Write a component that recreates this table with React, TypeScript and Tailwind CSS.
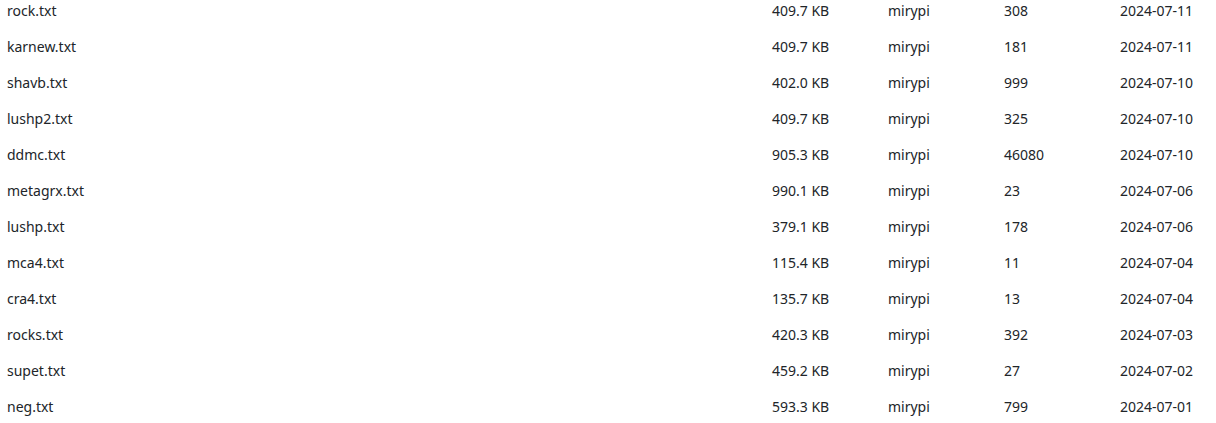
import React from 'react';

// ============================================================
// DATA
// ============================================================

interface FileRow {
  name: string;
  size: string;
  owner: string;
  downloads: number;
  date: string;
}

const FILES: FileRow[] = [
  { name: 'rock.txt', size: '409.7 KB', owner: 'mirypi', downloads: 308, date: '2024-07-11' },
  { name: 'karnew.txt', size: '409.7 KB', owner: 'mirypi', downloads: 181, date: '2024-07-11' },
  { name: 'shavb.txt', size: '402.0 KB', owner: 'mirypi', downloads: 999, date: '2024-07-10' },
  { name: 'lushp2.txt', size: '409.7 KB', owner: 'mirypi', downloads: 325, date: '2024-07-10' },
  { name: 'ddmc.txt', size: '905.3 KB', owner: 'mirypi', downloads: 46080, date: '2024-07-10' },
  { name: 'metagrx.txt', size: '990.1 KB', owner: 'mirypi', downloads: 23, date: '2024-07-06' },
  { name: 'lushp.txt', size: '379.1 KB', owner: 'mirypi', downloads: 178, date: '2024-07-06' },
  { name: 'mca4.txt', size: '115.4 KB', owner: 'mirypi', downloads: 11, date: '2024-07-04' },
  { name: 'cra4.txt', size: '135.7 KB', owner: 'mirypi', downloads: 13, date: '2024-07-04' },
  { name: 'rocks.txt', size: '420.3 KB', owner: 'mirypi', downloads: 392, date: '2024-07-03' },
  { name: 'supet.txt', size: '459.2 KB', owner: 'mirypi', downloads: 27, date: '2024-07-02' },
  { name: 'neg.txt', size: '593.3 KB', owner: 'mirypi', downloads: 799, date: '2024-07-01' },
];

export default function App() {
  return (
    <div
      className="w-[1216px] h-[423px] overflow-hidden bg-white text-[14px] text-[#212529]"
      style={{ fontFamily: '"Noto Sans", "Open Sans", sans-serif' }}
    >
      <div className="-mt-2">
        {FILES.map(file => (
          <div
            key={file.name}
            className="grid grid-cols-[765px_116px_116px_116px_1fr] items-center h-9 pl-[7px]"
          >
            <span>{file.name}</span>
            <span>{file.size}</span>
            <span>{file.owner}</span>
            <span>{file.downloads}</span>
            <span>{file.date}</span>
          </div>
        ))}
      </div>
    </div>
  );
}
